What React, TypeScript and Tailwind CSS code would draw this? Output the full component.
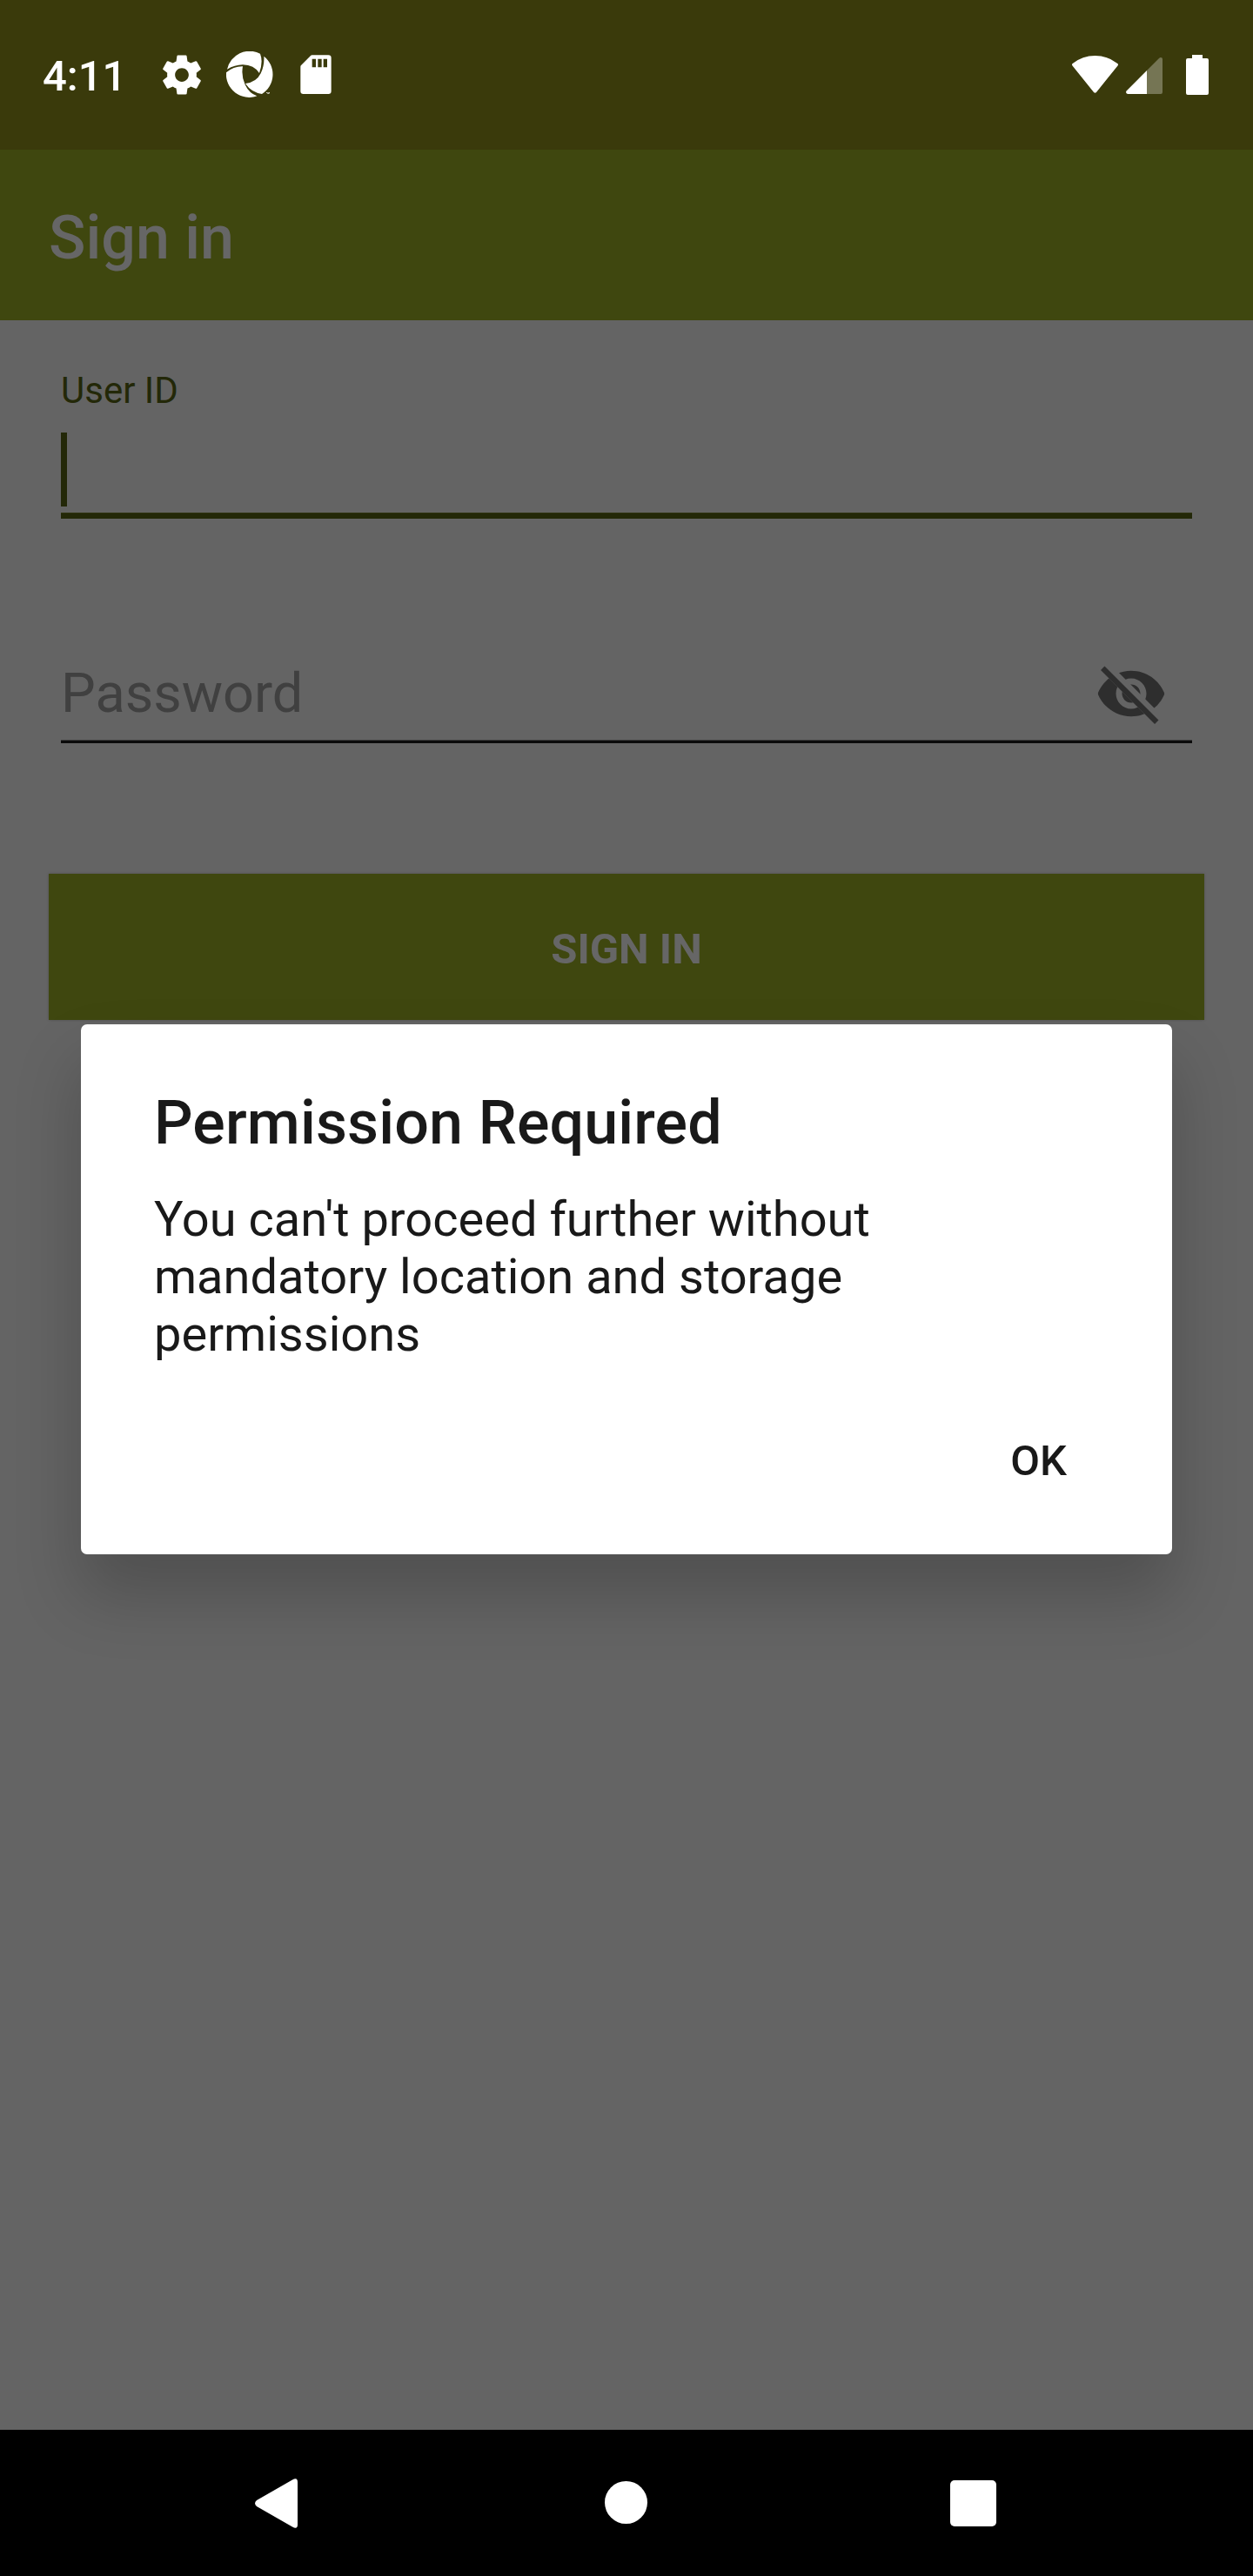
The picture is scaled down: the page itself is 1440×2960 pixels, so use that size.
import React from "react";

function GearIcon() {
  return (
    <svg viewBox="0 0 24 24" className="size-[54px]" fill="#fff">
      <path d="M19.43 12.98c.04-.32.07-.64.07-.98s-.03-.66-.07-.98l2.11-1.65c.19-.15.24-.42.12-.64l-2-3.46c-.12-.22-.39-.3-.61-.22l-2.49 1c-.52-.4-1.08-.73-1.69-.98l-.38-2.65C14.46 2.18 14.25 2 14 2h-4c-.25 0-.46.18-.49.42l-.38 2.65c-.61.25-1.17.59-1.69.98l-2.49-1c-.23-.09-.49 0-.61.22l-2 3.46c-.13.22-.07.49.12.64l2.11 1.65c-.04.32-.07.65-.07.98s.03.66.07.98l-2.11 1.65c-.19.15-.24.42-.12.64l2 3.46c.12.22.39.3.61.22l2.49-1c.52.4 1.08.73 1.69.98l.38 2.65c.03.24.24.42.49.42h4c.25 0 .46-.18.49-.42l.38-2.65c.61-.25 1.17-.59 1.69-.98l2.49 1c.23.09.49 0 .61-.22l2-3.46c.12-.22.07-.49-.12-.64l-2.11-1.65zM12 15.5c-1.93 0-3.5-1.57-3.5-3.5s1.57-3.5 3.5-3.5 3.5 1.57 3.5 3.5-1.57 3.5-3.5 3.5z" />
    </svg>
  );
}

function ApertureIcon() {
  return (
    <svg viewBox="0 0 162 162" className="size-[54px]" fill="#fff">
      <path d="M3 62A79.5 79.5 0 0 1 117 8Q128 36 114 75Q96 47 57 46Q29 47 3 62Z" />
      <path d="M130 17A79.5 79.5 0 0 1 123 147Q86 141 66 111Q104 107 119 76Q132 50 130 17Z" />
      <path d="M0 73Q26 51 57 52Q51 84 65 115Q79 145 106 154A79.5 79.5 0 0 1 0 73Z" />
      <path d="M138 142h5v4h-2v-2h-3zM145 142h5v5h-1v-3h-2v3h-2z" />
    </svg>
  );
}

function SdCardIcon() {
  return (
    <svg viewBox="0 0 108 136" className="w-[36px] h-[45.33px]" fill="#fff">
      <path
        fillRule="evenodd"
        d="M41 1H97Q107 1 107 11V125Q107 135 97 135H11Q1 135 1 125V41Q1 38 3 36L36 3Q38 1 41 1ZM41 14V43H54V14ZM61 14V43H74V14ZM80 14V43H93V14Z"
      />
    </svg>
  );
}

function WifiIcon() {
  return (
    <svg viewBox="0 0 159 129" className="w-[53px] h-[43px]" fill="#fff">
      <path d="M2 27Q36 0 79.500 0T157 27Q161 30 157 35L84 126Q79.500 131 75 126L2 35Q-2 30 2 27Z" />
    </svg>
  );
}

function SignalIcon() {
  return (
    <svg viewBox="0 0 126 126" className="size-[42px]">
      <path
        d="M72 45L114 3Q117 0 120 0Q126 0 126 6V120Q126 126 120 126H72Z"
        fill="#fff"
        fillOpacity="0.3"
      />
      <path d="M72 45V126H6Q-2 124 1 116Z" fill="#fff" />
    </svg>
  );
}

function BatteryIcon() {
  return (
    <svg viewBox="0 0 78 138" className="w-[26px] h-[46px]" fill="#fff">
      <path d="M21 0H57V12H72Q78 12 78 18V132Q78 138 72 138H6Q0 138 0 132V18Q0 12 6 12H21Z" />
    </svg>
  );
}

function HiddenEyeIcon() {
  return (
    <svg viewBox="0 0 24 24" className="size-[84px]" fill="#2e2e2e">
      <clipPath id="strike">
        <path d="M2 4.27L19.73 22L22.27 19.46L4.54 1.73V1H23V23H1V4.27Z" />
      </clipPath>
      <path
        clipPath="url(#strike)"
        d="M12 4.5C7 4.5 2.730 7.610 1 12c1.730 4.390 6 7.500 11 7.500s9.270-3.110 11-7.500c-1.730-4.390-6-7.500-11-7.500zM12 17c-2.760 0-5-2.240-5-5s2.240-5 5-5 5 2.240 5 5-2.240 5-5 5zM12 9c-1.660 0-3 1.340-3 3s1.340 3 3 3 3-1.340 3-3-1.340-3-3-3z"
      />
      <path d="M2 4.270L3.270 3L21 20.730L19.730 22Z" />
    </svg>
  );
}

function StatusBar() {
  return (
    <div className="flex h-[172px] items-center justify-between bg-[#3a3a0b] pl-[49px] pr-[51px]">
      <div className="flex items-center">
        <span className="mt-[4px] w-[133px] text-[49px] leading-[58px] font-medium text-white">4:11</span>
        <GearIcon />
        <div className="ml-[24px]">
          <ApertureIcon />
        </div>
        <div className="ml-[31px]">
          <SdCardIcon />
        </div>
      </div>
      <div className="flex items-center">
        <div className="-mt-[1px]">
          <WifiIcon />
        </div>
        <div className="ml-[9px] mt-[2px]">
          <SignalIcon />
        </div>
        <div className="ml-[27px]">
          <BatteryIcon />
        </div>
      </div>
    </div>
  );
}

function NavBar() {
  return (
    <div className="flex h-[168px] items-center bg-black">
      <svg viewBox="0 0 49 57" className="ml-[293px] w-[49px] h-[57px]" fill="#fff">
        <path d="M2 25L43 1.500Q49 -2 49 4V53Q49 59 43 55.500L2 32Q-2 28.500 2 25Z" />
      </svg>
      <div className="ml-[353px] -mt-px size-[49px] rounded-full bg-white" />
      <div className="ml-[348px] size-[53px] rounded-[5px] bg-white" />
    </div>
  );
}

function PermissionDialog() {
  return (
    <div className="absolute left-[93px] top-[1177px] flex h-[609px] w-[1254px] flex-col rounded-[7px] bg-white pl-[84px] pr-[121px] pt-[72px] text-[#191919] shadow-[0_46px_76px_2px_rgba(0,0,0,0.2)]">
      <h2 className="text-[70px] leading-[82px] font-medium tracking-[0.13px]">Permission Required</h2>
      <p className="mt-[37px] w-[900px] text-[56px] leading-[66px]">
        You can't proceed further without mandatory location and storage permissions
      </p>
      <button className="mt-[84px] self-end text-[49px] leading-[57px] font-medium">OK</button>
    </div>
  );
}

export default function App() {
  return (
    <div className="relative flex h-[2960px] w-[1440px] flex-col overflow-hidden bg-[#646464] font-['Roboto',sans-serif]">
      <StatusBar />
      <header className="flex h-[196px] items-center bg-[#3f470f] pl-[56px] pt-[6px] text-[70px] font-medium text-[#666666]">
        Sign in
      </header>
      <main className="flex flex-1 flex-col px-[56px]">
        <div className="mx-[14px] flex flex-col pt-[56px] text-[#232808]">
          <label className="text-[42px] leading-[49px]">User ID</label>
          <div className="mt-[24px] h-[85px] w-[7px] bg-[#232808]" />
          <div className="mt-[7px] h-[7px] border-t border-[#2d320f] bg-[#232808]" />
        </div>
        <div className="mx-[14px] mt-[159px] flex h-[99px] items-start justify-between border-b-[3px] border-[#0b0b0b] pr-[28px] shadow-[inset_0_-1px_0_#3c3c3c]">
          <span className="mt-[5px] text-[63px] leading-[74px] text-[#404040]">Password</span>
          <HiddenEyeIcon />
        </div>
        <button className="mt-[150px] flex h-[168px] items-center justify-center bg-[#3f470f] pt-[5px] text-[49px] font-bold text-[#666666] shadow-[0_0_3px_rgba(0,0,0,0.2)]">
          SIGN IN
        </button>
      </main>
      <NavBar />
      <PermissionDialog />
    </div>
  );
}
